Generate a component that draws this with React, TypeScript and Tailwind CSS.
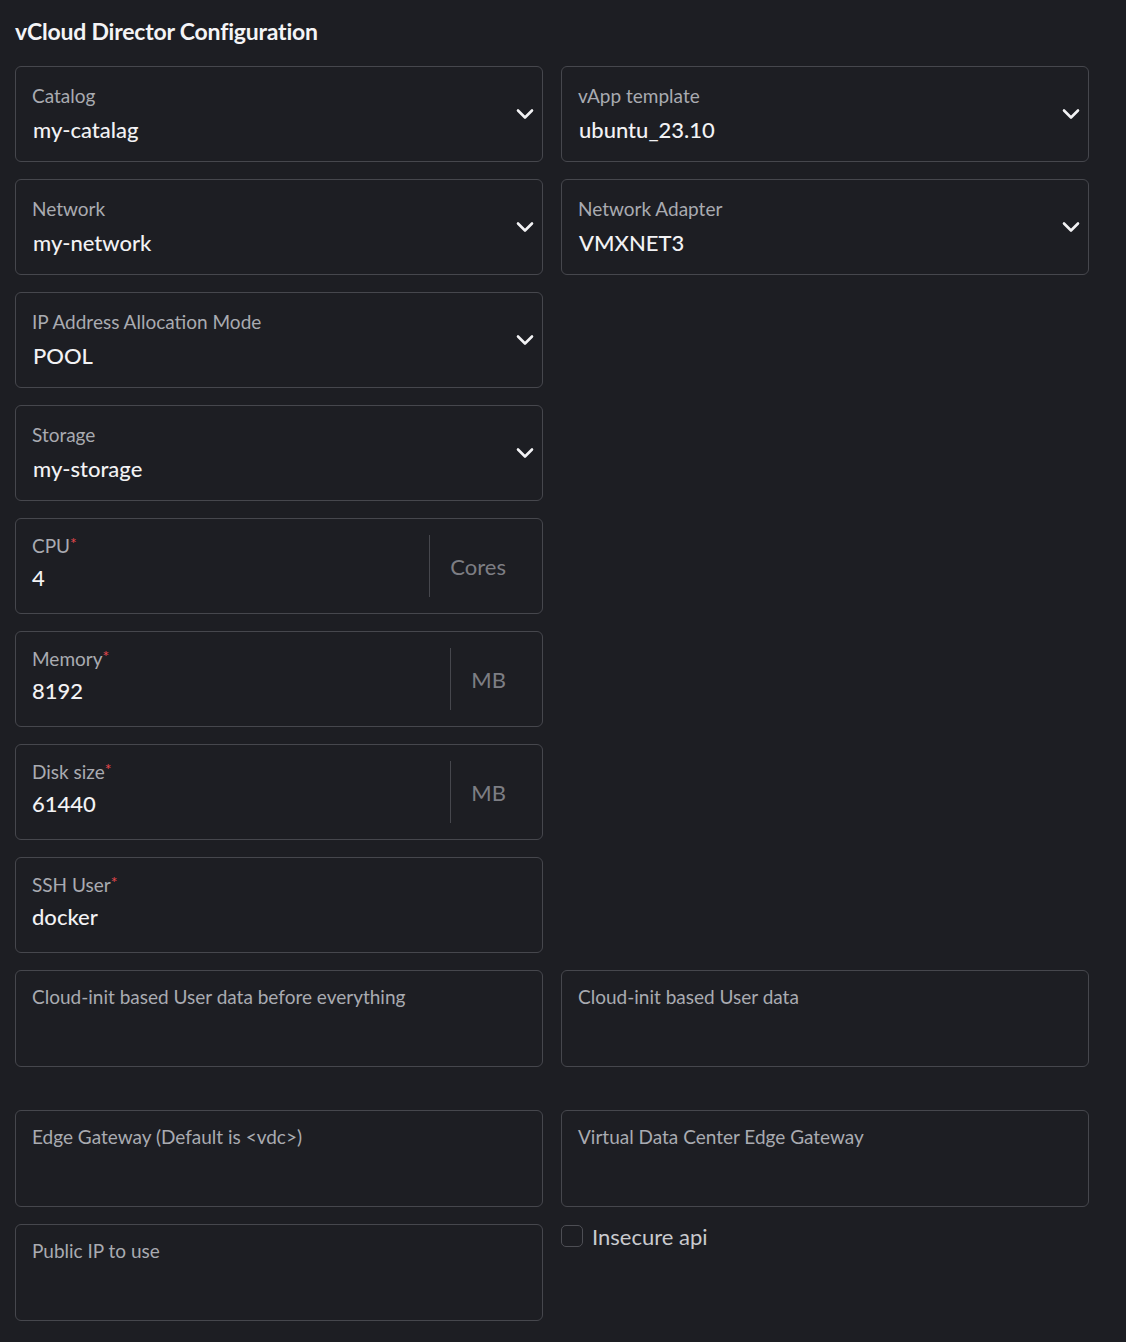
import React from 'react';

const font = { fontFamily: 'Lato, "Noto Sans", sans-serif' };

const Chevron = () => (
  <svg width="18" height="11" viewBox="0 0 18 11" className="absolute right-[8px] top-1/2 -translate-y-1/2 text-[#f2f2f4]">
    <polyline points="2,2 9,9 16,2" fill="none" stroke="currentColor" strokeWidth="2.6" strokeLinecap="round" strokeLinejoin="round" />
  </svg>
);

const Req = () => <span className="text-[#e5484d] text-[16px] align-top relative -top-[3px]">*</span>;

interface SelectProps {
  label: string;
  value: string;
}

const SelectField: React.FC<SelectProps> = ({ label, value }) => (
  <div className="relative h-[96px] rounded-md border border-[#46474d] px-4 pt-[16px]">
    <div className="text-[19px] leading-[26px] text-[#a9abb1]">{label}</div>
    <div className="mt-[6px] text-[22px] leading-[30px] font-medium text-[#f2f2f4] pl-px">{value}</div>
    <Chevron />
  </div>
);

interface InputProps {
  label: string;
  value: string;
  required?: boolean;
  suffix?: string;
}

const InputField: React.FC<InputProps> = ({ label, value, required, suffix }) => (
  <div className="flex h-[96px] rounded-md border border-[#46474d]">
    <div className="flex-1 px-4 pt-[14px]">
      <div className="text-[19px] leading-[26px] text-[#a9abb1]">
        {label}
        {required && <Req />}
      </div>
      <div className="mt-[4px] text-[22px] leading-[30px] font-medium text-[#f2f2f4]">{value}</div>
    </div>
    {suffix && (
      <div className="flex items-center my-4 border-l border-[#46474d] pl-5 pr-9">
        <span className="text-[22px] text-[#7d7e84]">{suffix}</span>
      </div>
    )}
  </div>
);

const TextArea: React.FC<{ label: string }> = ({ label }) => (
  <div className="h-[97px] rounded-md border border-[#46474d] px-4 pt-[13px]">
    <div className="text-[19px] leading-[26px] text-[#a9abb1]">{label}</div>
  </div>
);

export default function App() {
  return (
    <div className="min-h-[1342px] bg-[#1d1e23] pl-[15px] pt-4" style={font}>
      <h2 className="text-[23px] leading-[30px] font-bold text-[#f4f4f6] tracking-[-0.2px]">vCloud Director Configuration</h2>
      <div className="mt-[20px] grid grid-cols-[528px_528px] gap-x-[18px] gap-y-[17px]">
        <SelectField label="Catalog" value="my-catalag" />
        <SelectField label="vApp template" value="ubuntu_23.10" />
        <SelectField label="Network" value="my-network" />
        <SelectField label="Network Adapter" value="VMXNET3" />
        <SelectField label="IP Address Allocation Mode" value="POOL" />
        <div />
        <SelectField label="Storage" value="my-storage" />
        <div />
        <InputField label="CPU" value="4" required suffix="Cores" />
        <div />
        <InputField label="Memory" value="8192" required suffix="MB" />
        <div />
        <InputField label="Disk size" value="61440" required suffix="MB" />
        <div />
        <InputField label="SSH User" value="docker" required />
        <div />
        <TextArea label="Cloud-init based User data before everything" />
        <TextArea label="Cloud-init based User data" />
        <div className="col-span-2 h-[9px]" />
        <TextArea label="Edge Gateway (Default is <vdc>)" />
        <TextArea label="Virtual Data Center Edge Gateway" />
        <TextArea label="Public IP to use" />
        <label className="flex items-start gap-[9px] pt-[1px]">
          <span className="h-[22px] w-[22px] rounded-[5px] border border-[#4d4e54]" />
          <span className="text-[22px] leading-[24px] text-[#c9cace]">Insecure api</span>
        </label>
      </div>
    </div>
  );
}
